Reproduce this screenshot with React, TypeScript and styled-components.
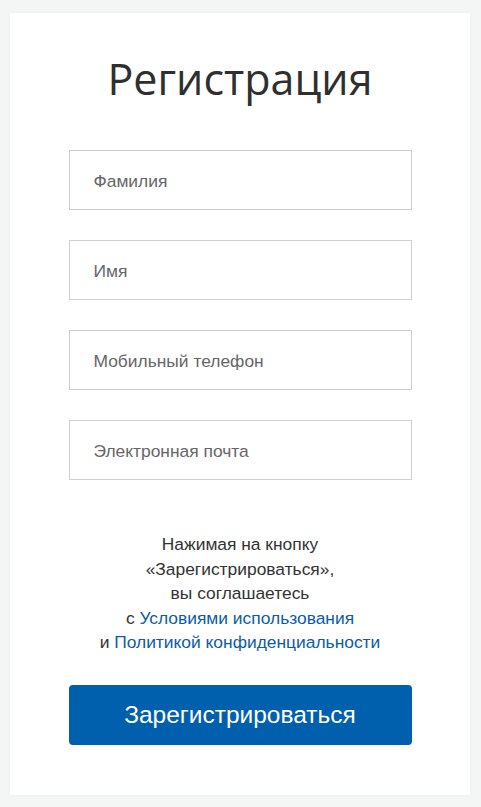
import React from "react";
import styled, { createGlobalStyle } from "styled-components";

const Global = createGlobalStyle`
  html, body { margin: 0; padding: 0; background: #f4f6f6; }
  body { font-family: "Liberation Sans", Arial, sans-serif; }
  * { box-sizing: border-box; }
`;

const Page = styled.div`
  padding: 13px 11px 12px 10px;
`;

const Card = styled.div`
  background: #fff;
  box-shadow: 0 0 3px rgba(0, 0, 0, 0.06);
  height: 782px;
  display: flex;
  flex-direction: column;
  align-items: center;
  padding-top: 36px;
`;

const Title = styled.h1`
  margin: 0;
  font-family: "Open Sans", sans-serif;
  font-weight: 400;
  font-size: 43px;
  line-height: 60px;
  color: #2f2f2f;
`;

const Form = styled.form`
  width: 343px;
  margin-top: 41px;
  display: flex;
  flex-direction: column;
  gap: 30px;
`;

const Input = styled.input`
  width: 100%;
  height: 60px;
  border: 1px solid #cfcfcf;
  padding: 3px 24px 0;
  font-family: "Liberation Sans", Arial, sans-serif;
  font-size: 17.4px;
  color: #333;
  outline: none;
  &::placeholder { color: #666; }
`;

const Note = styled.p`
  margin: 52px 0 0;
  text-align: center;
  font-size: 17.4px;
  line-height: 24.5px;
  color: #333;
`;

const Link = styled.a`
  color: #0d5ba8;
  text-decoration: none;
`;

const Button = styled.button`
  margin-top: 30px;
  width: 343px;
  height: 60px;
  border: none;
  border-radius: 4px;
  background: #0060ad;
  color: #fff;
  font-family: "Liberation Sans", Arial, sans-serif;
  font-size: 24.5px;
`;

export default function App() {
  return (
    <Page>
      <Global />
      <Card>
        <Title>Регистрация</Title>
        <Form onSubmit={(e) => e.preventDefault()}>
          <Input placeholder="Фамилия" />
          <Input placeholder="Имя" />
          <Input placeholder="Мобильный телефон" />
          <Input placeholder="Электронная почта" />
        </Form>
        <Note>
          Нажимая на кнопку
          <br />
          «Зарегистрироваться»,
          <br />
          вы соглашаетесь
          <br />
          с <Link href="#">Условиями использования</Link>
          <br />
          и <Link href="#">Политикой конфиденциальности</Link>
        </Note>
        <Button type="button">Зарегистрироваться</Button>
      </Card>
    </Page>
  );
}
